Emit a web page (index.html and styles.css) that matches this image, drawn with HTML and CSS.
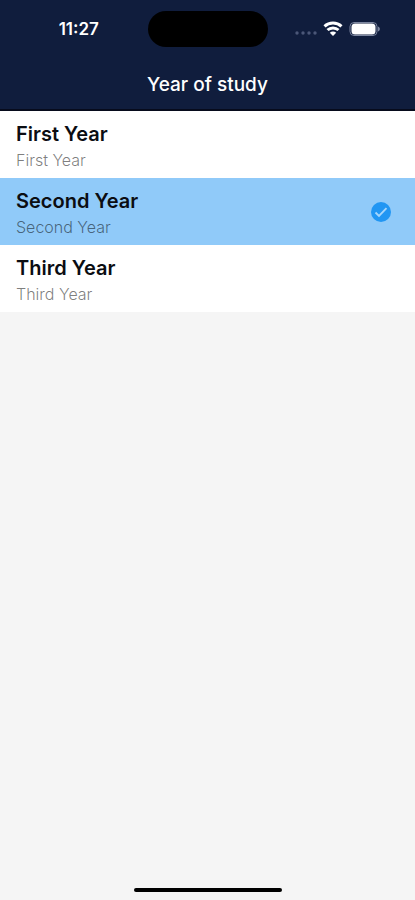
FILE: index.html
```html
<!DOCTYPE html>
<html lang="en">
<head>
<meta charset="utf-8">
<meta name="viewport" content="width=device-width, initial-scale=1">
<title>Year of study</title>
<link rel="stylesheet" href="styles.css">
</head>
<body>
<header class="header">
  <div class="status">
    <time class="clock">11:27</time>
    <div class="island"></div>
    <div class="indicators">
      <svg width="22" height="16" viewBox="0 0 22 16" fill="#4b5778" aria-hidden="true">
        <circle cx="2" cy="12" r="1.7"/><circle cx="8" cy="12" r="1.7"/><circle cx="14" cy="12" r="1.7"/><circle cx="20" cy="12" r="1.7"/>
      </svg>
      <svg width="20" height="16" viewBox="0 0 20 16" fill="none" stroke="#fff" stroke-width="3" aria-hidden="true">
        <path d="M1.500 5.300C6.200 .9 13.800 .9 18.500 5.300"/>
        <path d="M4.500 9C7.500 6.200 12.500 6.200 15.500 9"/>
        <path d="M10 15L6.800 11.800C8.600 10.200 11.400 10.200 13.200 11.800Z" fill="#fff" stroke="none"/>
      </svg>
      <svg width="32" height="16" viewBox="0 0 32 16" aria-hidden="true">
        <rect x="1" y="1.500" width="27" height="13" rx="4" fill="none" stroke="#7c86a0"/>
        <rect x="2.500" y="2.500" width="24" height="11" rx="3.500" fill="#fff"/>
        <path d="M29 5.500C31.500 6.500 31.500 9.500 29 10.500Z" fill="#7c86a0"/>
      </svg>
    </div>
  </div>
  <h1 class="title">Year of study</h1>
</header>
<main class="options" role="radiogroup" aria-label="Year of study">
  <label class="option">
    <input class="choice" type="radio" name="year" value="1">
    <span class="text"><span class="name">First Year</span><span class="detail">First Year</span></span>
  </label>
  <label class="option">
    <input class="choice" type="radio" name="year" value="2" checked>
    <span class="text"><span class="name">Second Year</span><span class="detail">Second Year</span></span>
    <svg class="check" width="20" height="20" viewBox="0 0 20 20" aria-hidden="true">
      <circle cx="10" cy="10" r="10" fill="#2196f3"/>
      <path d="M4.500 10.500L8 14L15.500 6.200" fill="none" stroke="#a6d5fb" stroke-width="1.900"/>
    </svg>
  </label>
  <label class="option">
    <input class="choice" type="radio" name="year" value="3">
    <span class="text"><span class="name">Third Year</span><span class="detail">Third Year</span></span>
  </label>
</main>
<footer class="footer"><div class="home"></div></footer>
</body>
</html>
```
FILE: styles.css
```css
* {
  box-sizing: border-box;
}

body {
  margin: 0;
  min-height: 100vh;
  display: flex;
  flex-direction: column;
  background: #f5f5f5;
  color: #0b0d12;
  font-family: Inter, "Liberation Sans", sans-serif;
}

.header {
  background: #101d3d;
  border-bottom: 2px solid #070b1c;
  color: #fff;
}

.status {
  display: grid;
  grid-template-columns: 1fr 120px 1fr;
  align-items: center;
  height: 58px;
}

.clock {
  padding-left: 10px;
  text-align: center;
  font-size: 17px;
  font-weight: 600;
}

.island {
  height: 36px;
  border-radius: 18px;
  background: #000;
}

.indicators {
  display: flex;
  align-items: center;
  justify-content: flex-end;
  gap: 6px;
  padding-right: 34px;
}

.title {
  margin: 0;
  padding: 13px 0 10px;
  text-align: center;
  font-size: 19px;
  line-height: 28px;
  font-weight: 500;
}

.option {
  display: flex;
  align-items: center;
  justify-content: space-between;
  height: 67px;
  padding: 0 24px 0 16px;
  background: #fff;
}

.option:has(.choice:checked) {
  background: #90caf9;
}

.choice {
  appearance: none;
  position: absolute;
  margin: 0;
}

.text {
  display: flex;
  flex-direction: column;
  padding-top: 2px;
}

.name {
  font-size: 20px;
  line-height: 28px;
  font-weight: 600;
}

.detail {
  font-size: 16px;
  line-height: 24px;
  font-weight: 300;
  color: rgb(0 0 0 / 52%);
}

.footer {
  display: flex;
  justify-content: center;
  margin-top: auto;
  padding: 8px;
}

.home {
  width: 148px;
  height: 4px;
  border-radius: 2px;
  background: #000;
}
```
